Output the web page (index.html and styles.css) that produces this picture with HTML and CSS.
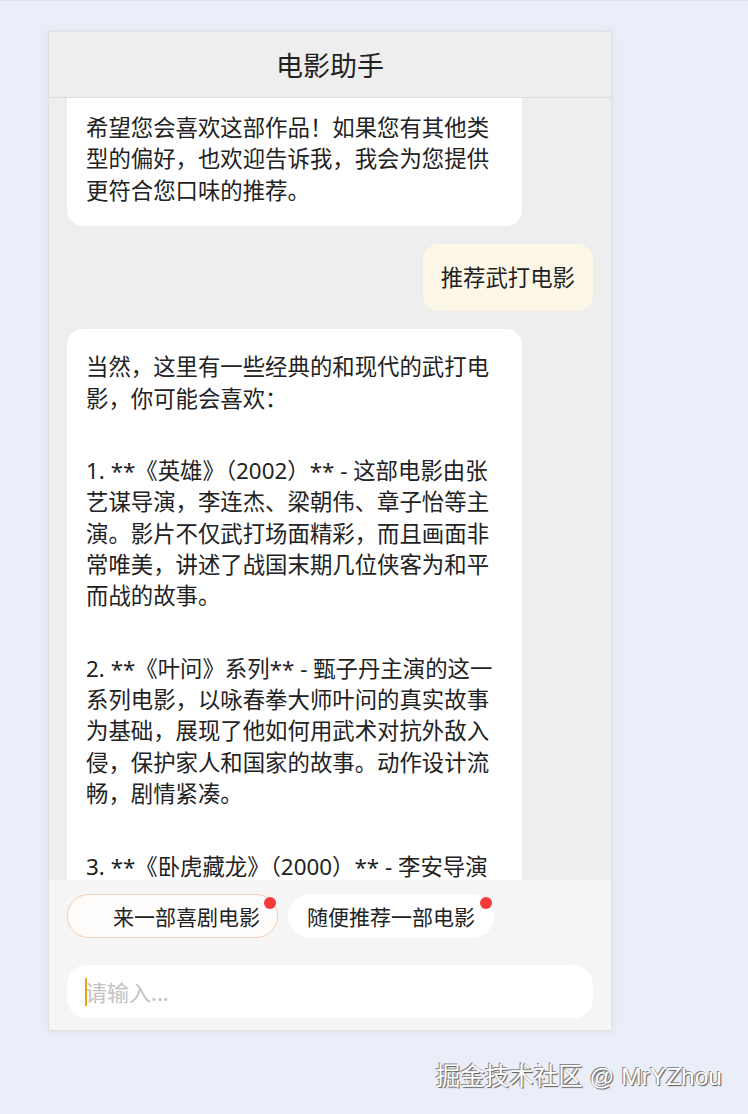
FILE: index.html
```html
<!DOCTYPE html>
<html lang="zh-CN">
<head>
  <meta charset="UTF-8">
  <meta name="viewport" content="width=device-width, initial-scale=1.0">
  <title>电影助手</title>
  <link rel="stylesheet" href="styles.css">
</head>
<body>
  <div class="chat">
    <header class="chat-header">电影助手</header>

    <div class="messages" id="messages">
      <div class="msg msg-user">推荐一部科幻电影</div>
      <div class="msg msg-bot">
        <p>当然！我推荐《星际穿越》（2014），这是一部由克里斯托弗·诺兰执导的科幻电影，讲述了一组宇航员穿越虫洞寻找人类新家园的故事。</p>
        <p>希望您会喜欢这部作品！如果您有其他类型的偏好，也欢迎告诉我，我会为您提供更符合您口味的推荐。</p>
      </div>
      <div class="msg msg-user" id="anchor">推荐武打电影</div>
      <div class="msg msg-bot">
        <p>当然，这里有一些经典的和现代的武打电影，你可能会喜欢：</p>
        <p>1. **《英雄》（2002）** - 这部电影由张艺谋导演，李连杰、梁朝伟、章子怡等主演。影片不仅武打场面精彩，而且画面非常唯美，讲述了战国末期几位侠客为和平而战的故事。</p>
        <p>2. **《叶问》系列** - 甄子丹主演的这一系列电影，以咏春拳大师叶问的真实故事为基础，展现了他如何用武术对抗外敌入侵，保护家人和国家的故事。动作设计流畅，剧情紧凑。</p>
        <p>3. **《卧虎藏龙》（2000）** - 李安导演的这部作品融合了武侠与爱情，画面优美，动作设计极具诗意。</p>
      </div>
    </div>

    <div class="chat-footer">
      <div class="chips">
        <button class="chip chip-active"><span class="chip-icon"></span>来一部喜剧电影<span class="dot"></span></button>
        <button class="chip">随便推荐一部电影<span class="dot"></span></button>
      </div>
      <div class="input-wrap">
        <span class="caret"></span>
        <input type="text" class="chat-input" placeholder="请输入...">
      </div>
    </div>
  </div>

  <div class="watermark">掘金技术社区 @ MrYZhou</div>

  <script>
    const messages = document.getElementById("messages");
    const anchor = document.getElementById("anchor");
    messages.scrollTop = anchor.offsetTop - 146;
  </script>
</body>
</html>
```

FILE: styles.css
```css
body {
  margin: 0;
  padding: 0;
  background-color: #e9eef8;
  border-top: 1px solid #dde2ec;
  font-family: "Noto Sans", "Noto Sans CJK SC", sans-serif;
  color: #222;
}

.chat {
  width: 564px;
  height: 1000px;
  margin: 30px 0 0 48px;
  box-sizing: border-box;
  border: 1px solid #e0e0e0;
  background-color: #eeeeee;
  box-shadow: 0 0 8px rgba(120, 130, 160, 0.12);
  display: flex;
  flex-direction: column;
}

.chat-header {
  height: 65px;
  flex-shrink: 0;
  display: flex;
  align-items: center;
  justify-content: center;
  font-size: 27px;
  color: #222;
  border-bottom: 1px solid #dcdcdc;
  background-color: #eeeeee;
}

.messages {
  position: relative;
  flex: 1;
  overflow: hidden;
  padding: 0 18px;
  display: flex;
  flex-direction: column;
  gap: 18px;
}

.msg {
  font-size: 22.4px;
  line-height: 1.4;
  padding: 18px;
  border-radius: 16px;
  word-break: break-all;
  flex-shrink: 0;
}

.msg p {
  margin: 0;
}

.msg p + p {
  margin-top: 41px;
}

.msg-bot {
  align-self: flex-start;
  max-width: 455px;
  box-sizing: border-box;
  background-color: #fff;
  padding: 22px 14px 20px 19px;
}

.msg-user {
  align-self: flex-end;
  background-color: #fdf7e8;
}

.chat-footer {
  height: 150px;
  flex-shrink: 0;
  box-sizing: border-box;
  background-color: #f5f5f5;
  padding: 14px 18px 12px;
  display: flex;
  flex-direction: column;
  gap: 27px;
}

.chips {
  display: flex;
  gap: 10px;
}

.chip {
  position: relative;
  height: 44px;
  padding: 0 18px;
  border: 1px solid transparent;
  border-radius: 22px;
  background-color: #fff;
  font-family: inherit;
  font-size: 21px;
  color: #222;
  display: flex;
  align-items: center;
  cursor: pointer;
}

.chip-active {
  border-color: #f2cdb4;
  background-color: #fffdfb;
  padding-right: 17px;
}

.chip-icon {
  display: inline-block;
  width: 27px;
}

.dot {
  position: absolute;
  top: 2px;
  right: 1px;
  width: 12px;
  height: 12px;
  border-radius: 50%;
  background-color: #f5393b;
}

.input-wrap {
  position: relative;
}

.chat-input {
  width: 100%;
  height: 53px;
  box-sizing: border-box;
  border: none;
  border-radius: 20px;
  background-color: #fff;
  padding: 0 18px;
  font-family: inherit;
  font-size: 22px;
  color: #222;
  outline: none;
}

.chat-input::placeholder {
  color: #c2c2c2;
}

.caret {
  position: absolute;
  left: 18px;
  top: 13px;
  width: 2px;
  height: 28px;
  background-color: #e6a317;
  z-index: 1;
}

.watermark {
  text-align: right;
  padding: 26px 26px 0 0;
  font-family: "Liberation Sans", "Noto Sans CJK SC", sans-serif;
  font-size: 24.5px;
  color: #fff;
  text-shadow: -1px -1px 0 #888, 1px 1px 1px #555;
}
```
